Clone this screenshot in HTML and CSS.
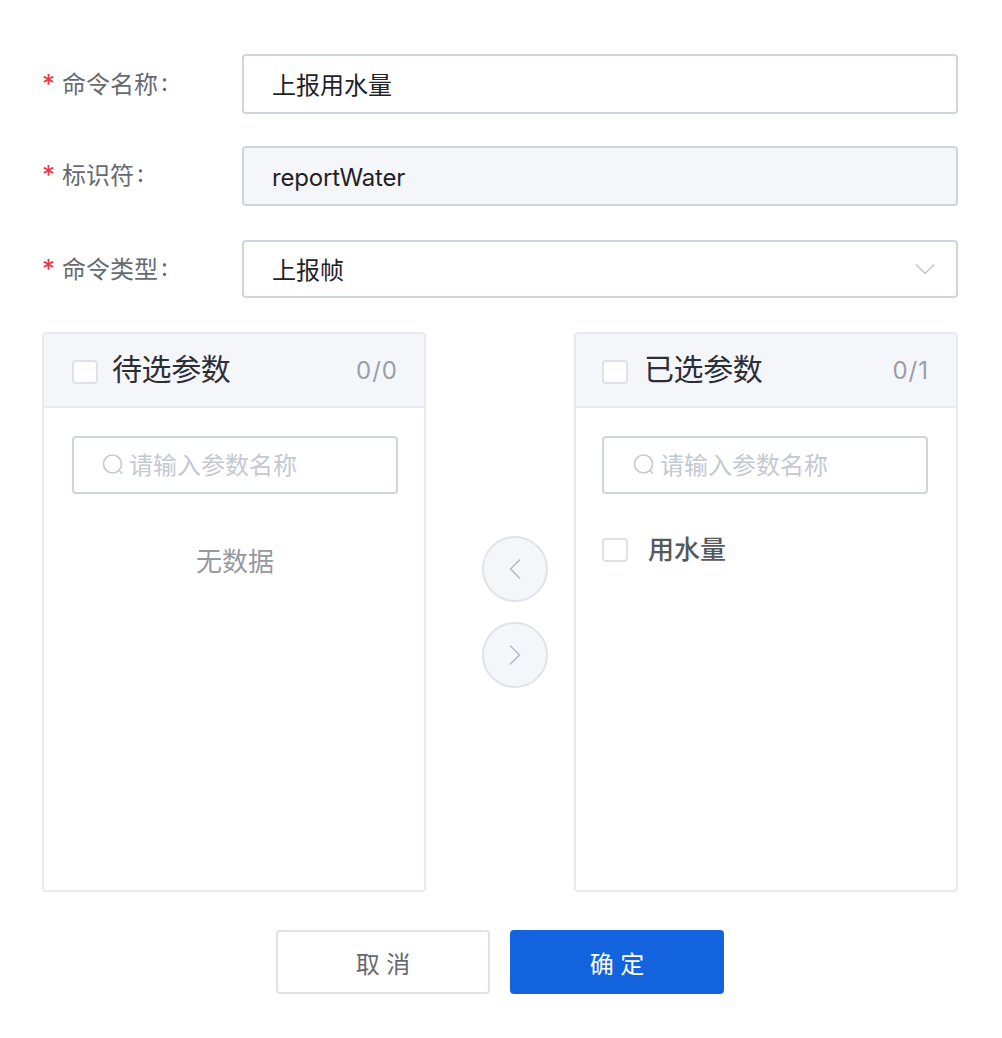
FILE: index.html
```html
<!DOCTYPE html>
<html lang="zh-CN">
<head>
    <meta charset="UTF-8">
    <meta name="viewport" content="width=device-width, initial-scale=1.0">
    <title>命令</title>
    <link rel="stylesheet" href="styles.css">
</head>
<body>
    <form class="command-form">
        <div class="form-row row-name">
            <label class="form-label"><span class="required">*</span>命令名称<span class="colon">:</span></label>
            <input class="form-input" type="text" value="上报用水量">
        </div>
        <div class="form-row row-id">
            <label class="form-label"><span class="required">*</span>标识符<span class="colon">:</span></label>
            <input class="form-input is-disabled" type="text" value="reportWater" disabled>
        </div>
        <div class="form-row row-type">
            <label class="form-label"><span class="required">*</span>命令类型<span class="colon">:</span></label>
            <div class="form-select">
                <span>上报帧</span>
                <svg class="select-arrow" width="20" height="12" viewBox="0 0 20 12" fill="none">
                    <path d="M1 1.5l9 9 9-9" stroke="#c0c4cc" stroke-width="1.5"/>
                </svg>
            </div>
        </div>

        <div class="transfer">
            <section class="panel panel-left">
                <header class="panel-header">
                    <span class="checkbox"></span>
                    <span class="panel-title">待选参数</span>
                    <span class="panel-count">0/0</span>
                </header>
                <div class="panel-body">
                    <div class="search">
                        <svg class="search-icon" width="24" height="24" viewBox="0 0 24 24" fill="none">
                            <circle cx="11.5" cy="11" r="9" stroke="#c4c8d0" stroke-width="1.6"/>
                            <path d="M18 17.5l3 3" stroke="#c4c8d0" stroke-width="1.6"/>
                        </svg>
                        <input class="search-input" type="text" placeholder="请输入参数名称">
                    </div>
                    <p class="empty">无数据</p>
                </div>
            </section>

            <div class="transfer-actions">
                <button class="round-btn" type="button">
                    <svg width="14" height="22" viewBox="0 0 14 22" fill="none">
                        <path d="M12 1.5L2.5 11l9.5 9.5" stroke="#b4b8c2" stroke-width="1.5"/>
                    </svg>
                </button>
                <button class="round-btn" type="button">
                    <svg width="14" height="22" viewBox="0 0 14 22" fill="none">
                        <path d="M2 1.5l9.5 9.5L2 20.5" stroke="#b4b8c2" stroke-width="1.5"/>
                    </svg>
                </button>
            </div>

            <section class="panel panel-right">
                <header class="panel-header">
                    <span class="checkbox"></span>
                    <span class="panel-title">已选参数</span>
                    <span class="panel-count">0/1</span>
                </header>
                <div class="panel-body">
                    <div class="search">
                        <svg class="search-icon" width="24" height="24" viewBox="0 0 24 24" fill="none">
                            <circle cx="11.5" cy="11" r="9" stroke="#c4c8d0" stroke-width="1.6"/>
                            <path d="M18 17.5l3 3" stroke="#c4c8d0" stroke-width="1.6"/>
                        </svg>
                        <input class="search-input" type="text" placeholder="请输入参数名称">
                    </div>
                    <div class="param-item">
                        <span class="checkbox"></span>
                        <span class="param-name">用水量</span>
                    </div>
                </div>
            </section>
        </div>

        <div class="form-actions">
            <button class="btn" type="button">取 消</button>
            <button class="btn btn-primary" type="button">确 定</button>
        </div>
    </form>
</body>
</html>
```

FILE: styles.css
```css
:root {
    --border: #d0d4db;
    --border-light: #e8eaf0;
    --bg-light: #f5f6fa;
    --text: #1f2229;
    --text-muted: #666a70;
    --placeholder: #c4c8d0;
    --primary: #1263dd;
}

* {
    margin: 0;
    padding: 0;
    box-sizing: border-box;
}

body {
    font-family: "Inter", "Noto Sans CJK SC", sans-serif;
    background: #fff;
    color: var(--text);
}

.command-form {
    width: 916px;
    margin-left: 42px;
    padding-top: 54px;
}

.form-row {
    display: flex;
    align-items: center;
}

.row-name { height: 60px; margin-bottom: 32px; }
.row-id { height: 60px; margin-bottom: 34px; }
.row-type { height: 58px; margin-bottom: 34px; }

.form-label {
    width: 200px;
    font-size: 24px;
    line-height: 60px;
    color: var(--text-muted);
}

.row-id .form-label {
    margin-top: -2px;
}

.required {
    display: inline-block;
    width: 20px;
    font-size: 26px;
    color: #ee3540;
}

.colon {
    margin-left: 3px;
    position: relative;
    top: -2px;
}

.form-input,
.form-select {
    flex: 1;
    height: 100%;
    border: 2px solid var(--border);
    border-radius: 4px;
    padding: 0 21px 2px 28px;
    font: inherit;
    font-size: 24px;
    color: var(--text);
    background: #fff;
}

.form-input.is-disabled {
    padding: 2px 21px 0 28px;
    letter-spacing: -0.2px;
    background: var(--bg-light);
    -webkit-text-fill-color: var(--text);
    opacity: 1;
}

.form-select {
    display: flex;
    align-items: center;
    justify-content: space-between;
}

.select-arrow {
    margin-top: 2px;
}

.transfer {
    display: flex;
    align-items: center;
}

.panel {
    width: 384px;
    height: 560px;
    border: 2px solid var(--border-light);
    border-radius: 4px;
}

.panel-header {
    display: flex;
    align-items: center;
    height: 74px;
    background: var(--bg-light);
    border-bottom: 2px solid var(--border-light);
}

.panel-left .panel-header { padding: 0 26px 0 28px; }
.panel-right .panel-header { padding: 0 27px 0 26px; }

.checkbox {
    flex: none;
    width: 26px;
    height: 24px;
    background: #fff;
    border: 2px solid #dfe2e8;
    border-radius: 4px;
}

.panel-header .checkbox {
    margin-top: 4px;
}

.panel-title {
    flex: 1;
    margin-left: 14px;
    font-size: 30px;
    letter-spacing: -0.4px;
    line-height: 40px;
    margin-top: -2px;
    color: #2b2e35;
}

.panel-right .panel-title {
    margin-left: 16px;
}

.panel-count {
    font-size: 24px;
    letter-spacing: 1px;
    color: #9a9ea6;
}

.panel-body {
    padding-top: 28px;
}

.panel-left .panel-body { padding-left: 28px; }
.panel-right .panel-body { padding-left: 26px; }

.search {
    display: flex;
    align-items: center;
    width: 326px;
    height: 58px;
    padding-left: 27px;
    border: 2px solid var(--border);
    border-radius: 4px;
}

.panel-right .search {
    padding-left: 28px;
}

.search-input {
    flex: 1;
    min-width: 0;
    margin-left: 4px;
    border: none;
    outline: none;
    font: inherit;
    font-size: 24px;
    color: var(--text);
    background: transparent;
}

.search-input::placeholder {
    color: var(--placeholder);
}

.empty {
    width: 326px;
    margin-top: 48px;
    text-align: center;
    font-size: 26px;
    line-height: 40px;
    color: #96999f;
}

.param-item {
    display: flex;
    align-items: center;
    margin-top: 36px;
}

.param-name {
    margin-left: 20px;
    font-size: 26px;
    font-weight: 500;
    line-height: 40px;
    color: #55585e;
}

.transfer-actions {
    flex: 1;
    display: flex;
    flex-direction: column;
    align-items: center;
    gap: 20px;
    padding-left: 30px;
}

.round-btn {
    display: flex;
    align-items: center;
    justify-content: center;
    width: 66px;
    height: 66px;
    border: 2px solid #e0e2e8;
    border-radius: 50%;
    background: var(--bg-light);
}

.form-actions {
    display: flex;
    justify-content: center;
    gap: 20px;
    margin-top: 38px;
}

.btn {
    width: 214px;
    height: 64px;
    border: 2px solid #e0e2e8;
    border-radius: 4px;
    background: #fff;
    font: inherit;
    font-size: 24px;
    color: var(--text-muted);
}

.btn-primary {
    background: var(--primary);
    border-color: var(--primary);
    color: #fff;
}
```
